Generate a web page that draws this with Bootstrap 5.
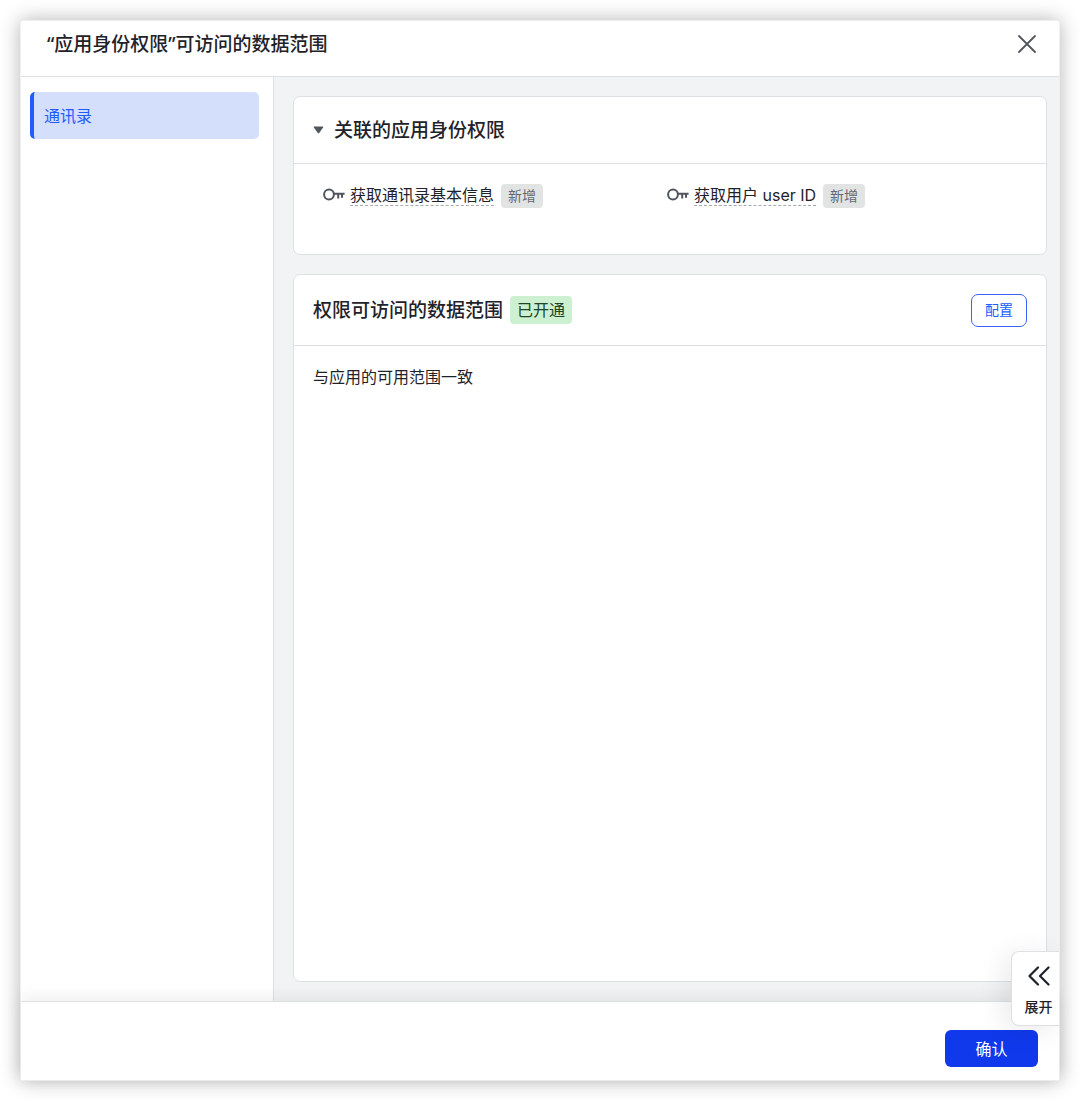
<!DOCTYPE html>
<html lang="zh-CN">
<head>
<meta charset="utf-8">
<meta name="viewport" content="width=device-width, initial-scale=1">
<title>“应用身份权限”可访问的数据范围</title>
<link href="https://cdn.jsdelivr.net/npm/bootstrap@5.3.0/dist/css/bootstrap.min.css" rel="stylesheet">
<style>
  body { font-family: Inter, "Noto Sans CJK SC", sans-serif; font-size: 16px; line-height: 24px; color: #1f2329; background: #fff; padding: 20px; }
  .dialog { min-height: calc(100vh - 40px); background: #fff; border: 1px solid #f0f0f0; border-radius: 3px; box-shadow: 0 0 20px rgba(0,0,0,.3); }
  .dialog-head { height: 56px; padding: 0 21px 10px 26px; border-bottom: 1px solid #dee0e3; }
  .heading { font-family: "Noto Sans", "Noto Sans CJK SC", sans-serif; font-size: 19px; line-height: 28px; font-weight: 500; margin: 0; }
  .plain-btn { border: 0; background: none; padding: 0; color: #51565d; line-height: 0; }
  .side { width: 253px; flex: none; border-right: 1px solid #dee0e3; padding: 15px 14px 15px 9px; }
  .side .nav-link { height: 47px; padding: 0 10px; line-height: 48px; color: #245bff; background: #d4dffc; border-left: 4px solid #245bff; border-radius: 5px; }
  .content { background: #f2f3f5; padding: 19px 12px 19px 19px; gap: 19px; min-width: 0; }
  .panel { border: 1px solid #dee0e3; border-radius: 7px; }
  .panel-head { border-bottom: 1px solid #dee0e3; padding: 0 19px; }
  .head-a { height: 67px; gap: 10px; }
  .head-b { height: 71px; }
  .perms { padding: 20px 35px 46px 29px; }
  .perms svg { margin: 0 4px 2px 0; }
  .perm-name { line-height: 20px; margin-bottom: 2px; color: #1f2329; text-decoration: none; border-bottom: 1px dashed #a6a9ae; }
  .tag-new { font-size: 14px; line-height: 24px; padding: 0 7px; margin-left: 7px; border-radius: 4px; background: #e2e4e4; color: #646a73; }
  .tag-on { line-height: 28px; padding: 0 7px; margin-left: 7px; border-radius: 4px; background: #ccf0d0; color: #20442a; }
  .panel-text { margin: 0; padding: 19px; }
  .btn-config { width: 56px; height: 33px; padding: 0; font-size: 14px; line-height: 30px; color: #245bff; border: 1px solid #3a62f5; border-radius: 7px; background: #fff; }
  .dialog-foot { position: relative; border-top: 1px solid #dee0e3; background: #fff; box-shadow: 0 -4px 16px rgba(0,0,0,.07); padding: 28px 21px 13px; }
  .btn-ok { width: 93px; height: 37px; padding: 0; color: #fff; background: #1039ec; border: 0; border-radius: 6px; }
  .expand { position: absolute; right: 0; bottom: 54px; width: 48px; height: 75px; padding: 14px 0 0 6px; gap: 11px; border: 1px solid #dee0e3; border-right: 0; border-radius: 8px 0 0 8px; background: #fff; color: #1f2329; font-size: 14px; line-height: 20px; font-weight: 500; box-shadow: -6px 4px 28px rgba(0,0,0,.09); clip-path: inset(-50px 0 -50px -50px); }
</style>
</head>
<body class="min-vh-100">
<div class="dialog d-flex flex-column" role="dialog" aria-labelledby="dlg-title">
  <header class="dialog-head d-flex align-items-center justify-content-between">
    <h1 class="heading" id="dlg-title">“应用身份权限”可访问的数据范围</h1>
    <button class="plain-btn" type="button" aria-label="关闭">
      <svg width="22" height="22" viewBox="0 0 22 22" fill="none" stroke="currentColor" stroke-width="1.8" stroke-linecap="round"><path d="M3 3l16 16M19 3L3 19"/></svg>
    </button>
  </header>
  <div class="d-flex flex-grow-1">
    <nav class="side nav flex-column">
      <a class="nav-link active" href="#" aria-current="page">通讯录</a>
    </nav>
    <main class="content d-flex flex-column flex-grow-1">
      <section class="panel bg-white">
        <div class="panel-head head-a d-flex align-items-center">
          <button class="plain-btn d-flex align-items-center" type="button" aria-label="收起">
            <svg width="11" height="8" viewBox="0 0 11 8"><path d="M1.3 .5h8.400q.9 0 .4.900L6.200 6.900q-.7.800-1.400 0L.9 1.400Q.4.500 1.300.5z" fill="currentColor"/></svg>
          </button>
          <h2 class="heading">关联的应用身份权限</h2>
        </div>
        <div class="perms row g-0">
          <div class="col-6 d-flex align-items-center">
            <svg width="23" height="14" viewBox="0 0 23 14" fill="none" stroke="#51565d" stroke-width="2"><circle cx="6" cy="6.500" r="4.900"/><path d="M10.800 5.800H21.600M15.200 5.800v4.600M19 5.800v4"/></svg>
            <a class="perm-name" href="#">获取通讯录基本信息</a>
            <span class="tag-new">新增</span>
          </div>
          <div class="col-6 d-flex align-items-center">
            <svg width="23" height="14" viewBox="0 0 23 14" fill="none" stroke="#51565d" stroke-width="2"><circle cx="6" cy="6.500" r="4.900"/><path d="M10.800 5.800H21.600M15.200 5.800v4.600M19 5.800v4"/></svg>
            <a class="perm-name" href="#">获取用户 user ID</a>
            <span class="tag-new">新增</span>
          </div>
        </div>
      </section>
      <section class="panel bg-white flex-grow-1">
        <div class="panel-head head-b d-flex align-items-center">
          <h2 class="heading">权限可访问的数据范围</h2>
          <span class="tag-on">已开通</span>
          <button class="btn btn-config ms-auto" type="button">配置</button>
        </div>
        <p class="panel-text">与应用的可用范围一致</p>
      </section>
    </main>
  </div>
  <footer class="dialog-foot d-flex justify-content-end">
    <button class="btn btn-ok" type="button">确认</button>
    <button class="expand d-flex flex-column align-items-center" type="button">
      <svg width="24" height="20" viewBox="0 0 24 20" fill="none" stroke="currentColor" stroke-width="2.200" stroke-linecap="round" stroke-linejoin="round" class="flex-shrink-0"><path d="M11 1.500L2.500 10l8.500 8.500M21.500 1.500L13 10l8.500 8.500"/></svg>
      展开
    </button>
  </footer>
</div>
<script src="https://cdn.jsdelivr.net/npm/bootstrap@5.3.0/dist/js/bootstrap.bundle.min.js"></script>
</body>
</html>
